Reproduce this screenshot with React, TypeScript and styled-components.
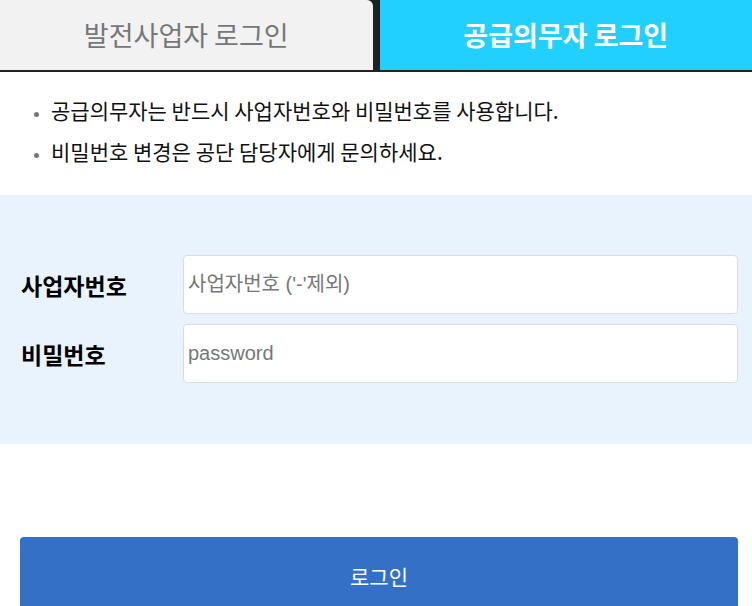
import styled, { createGlobalStyle } from "styled-components";

const Global = createGlobalStyle`
    body {
        margin: 0;
        background: #fff;
        font-family: "Noto Sans CJK KR", "Noto Sans", sans-serif;
    }
`

const App = () => {
    return (<Page>
        <Global />
        <Tabs>
            <Tab>발전사업자 로그인</Tab>
            <Tab active>공급의무자 로그인</Tab>
        </Tabs>
        <Notice>
            <li>공급의무자는 반드시 사업자번호와 비밀번호를 사용합니다.</li>
            <li>비밀번호 변경은 공단 담당자에게 문의하세요.</li>
        </Notice>
        <FormBox>
            <Row>
                <Label>사업자번호</Label>
                <Input placeholder="사업자번호 ('-'제외)" />
            </Row>
            <Row>
                <Label>비밀번호</Label>
                <Input type="password" placeholder="password" />
            </Row>
        </FormBox>
        <Submit>로그인</Submit>
    </Page>)
}

const Page = styled.div`
    width: 752px;
    height: 606px;
    overflow: hidden;
`

const Tabs = styled.div`
    display: flex;
    gap: 7px;
    height: 70px;
    background: #1c2222;
    border-bottom: 2px solid #222;
`

const Tab = styled.div<{ active?: boolean }>`
    flex: 1;
    display: flex;
    align-items: center;
    justify-content: center;
    padding-bottom: 2px;
    background: ${p => p.active ? "#22d0ff" : "#f2f2f2"};
    color: ${p => p.active ? "#fff" : "#777"};
    font-size: 27px;
    font-weight: ${p => p.active ? 700 : 400};
    border-top-right-radius: ${p => p.active ? "0" : "6px"};
`

const Notice = styled.ul`
    margin: 0;
    padding: 18px 0 23px 51px;
    font-size: 21px;
    color: #111;
    li {
        line-height: 41px;
    }
    li::marker {
        color: #777;
        font-size: 14px;
    }
`

const FormBox = styled.div`
    background: #e8f3fe;
    height: 249px;
    box-sizing: border-box;
    padding: 60px 14px 0 21px;
    display: flex;
    flex-direction: column;
    gap: 10px;
`

const Row = styled.div`
    display: flex;
    align-items: center;
`

const Label = styled.div`
    width: 162px;
    font-size: 23px;
    font-weight: 700;
    color: #000;
`

const Input = styled.input`
    flex: 1;
    height: 59px;
    box-sizing: border-box;
    border: 1px solid #dadde0;
    border-radius: 4px;
    background: #fff;
    padding: 0 4px;
    font-family: "Liberation Sans", "Noto Sans CJK KR", sans-serif;
    font-size: 20px;
    outline: none;
    &::placeholder {
        color: #777;
    }
`

const Submit = styled.button`
    display: flex;
    align-items: center;
    justify-content: center;
    margin: 93px 14px 0 20px;
    width: 718px;
    height: 78px;
    border: none;
    border-radius: 4px;
    background: #3471c6;
    color: #fff;
    font-family: "Noto Sans CJK KR", sans-serif;
    font-size: 21px;
    padding: 0;
`

export default App
